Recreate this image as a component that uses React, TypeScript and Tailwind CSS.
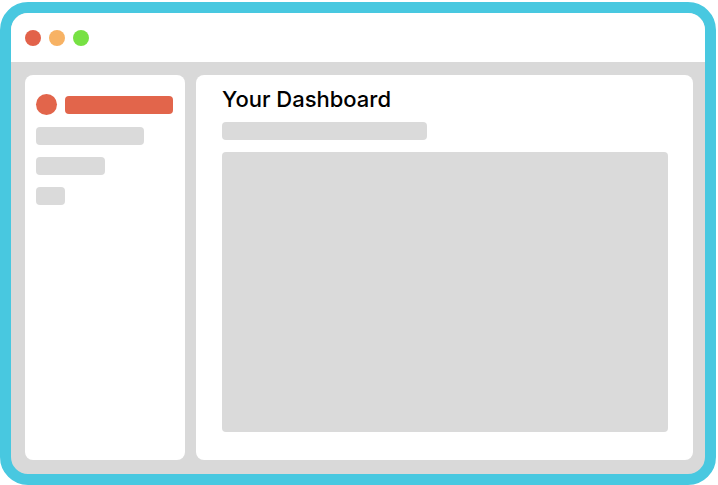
export default function App() {
  return (
    <div className="w-[718px] h-[485px] bg-white pt-[2px]">
      <div className="w-[716px] h-[483px] rounded-[28px] border-[11px] border-[#48C8E0] bg-[#D9D9D9] overflow-hidden flex flex-col">
        <div className="h-[49px] bg-white flex items-center gap-[8px] pl-[14px] shrink-0">
          <span className="w-[16px] h-[16px] rounded-full bg-[#E2624A]" />
          <span className="w-[16px] h-[16px] rounded-full bg-[#F7B264]" />
          <span className="w-[16px] h-[16px] rounded-full bg-[#77E143]" />
        </div>
        <div className="flex-1 flex gap-[11px] pl-[14px] pr-[12px] pt-[13px] pb-[14px]">
          <div className="w-[160px] bg-white rounded-[8px] pl-[11px] pr-[12px] pt-[19px]">
            <div className="flex items-center gap-[8px]">
              <span className="w-[21px] h-[21px] rounded-full bg-[#E2654B]" />
              <span className="flex-1 h-[18px] rounded-[4px] bg-[#E2654B]" />
            </div>
            <div className="mt-[12px] w-[108px] h-[18px] rounded-[4px] bg-[#DADADA]" />
            <div className="mt-[12px] w-[69px] h-[18px] rounded-[4px] bg-[#DADADA]" />
            <div className="mt-[12px] w-[29px] h-[18px] rounded-[4px] bg-[#DADADA]" />
          </div>
          <div className="flex-1 bg-white rounded-[8px] pl-[26px] pr-[25px] pt-[10px] pb-[28px] flex flex-col">
            <h1 className="text-[22px] leading-[29px] font-medium text-black" style={{ fontFamily: "Inter, sans-serif" }}>
              Your Dashboard
            </h1>
            <div className="mt-[8px] w-[205px] h-[18px] rounded-[4px] bg-[#DADADA]" />
            <div className="mt-[12px] flex-1 rounded-[4px] bg-[#DADADA]" />
          </div>
        </div>
      </div>
    </div>
  );
}
